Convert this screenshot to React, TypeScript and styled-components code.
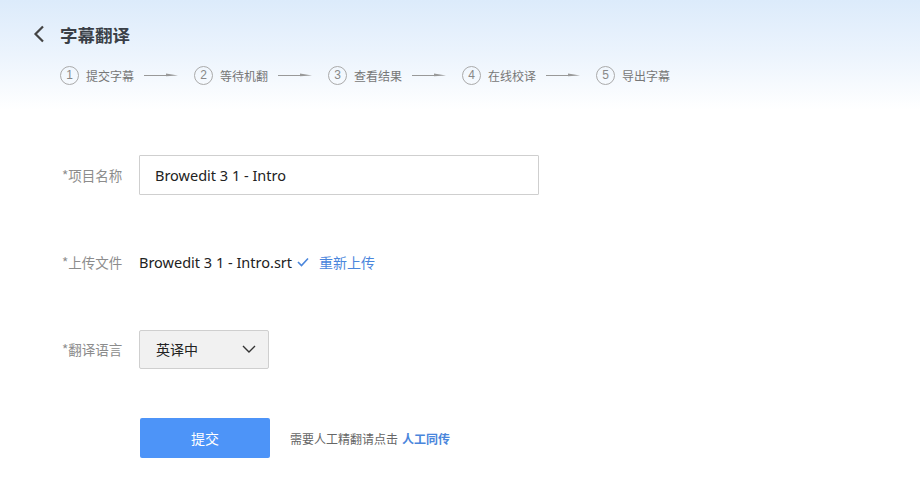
import React from 'react';
import styled, { createGlobalStyle } from 'styled-components';

const GlobalStyle = createGlobalStyle`
  html, body {
    margin: 0;
    padding: 0;
    background: #ffffff;
  }
  body {
    font-family: "Noto Sans", "Noto Sans CJK SC", sans-serif;
    color: #333;
  }
`;

const Page = styled.div`
  width: 920px;
  height: 490px;
  overflow: hidden;
  background: #fff;
`;

const Header = styled.header`
  padding: 20px 0 0 30px;
  height: 90px;
  background: linear-gradient(180deg, #dcebfb 0%, #ecf4fd 50%, #ffffff 100%);
`;

const TitleRow = styled.div`
  display: flex;
  align-items: center;
  height: 28px;
  gap: 12px;
`;

const BackButton = styled.button`
  display: flex;
  align-items: center;
  justify-content: center;
  width: 18px;
  height: 24px;
  padding: 0;
  border: none;
  background: none;
  color: #444;
  cursor: pointer;
`;

const Title = styled.h1`
  margin: 0;
  font-size: 17.5px;
  font-weight: 700;
  color: #3a3f47;
  font-family: "Noto Sans CJK SC", sans-serif;
`;

const Steps = styled.ol`
  display: flex;
  align-items: center;
  list-style: none;
  margin: 16px 0 0 30px;
  padding: 0;
  height: 22px;
`;

const Step = styled.li`
  display: flex;
  align-items: center;
`;

const StepNum = styled.span`
  display: flex;
  align-items: center;
  justify-content: center;
  width: 17px;
  height: 17px;
  border: 1px solid #aaa;
  border-radius: 50%;
  font-size: 12px;
  color: #888;
  font-family: "Liberation Sans", sans-serif;
  margin-right: 7px;
`;

const StepLabel = styled.span`
  font-size: 12px;
  color: #777;
  font-family: "Noto Sans CJK SC", sans-serif;
  width: 48px;
  white-space: nowrap;
`;

const Arrow = styled.svg`
  margin: 0 16px 0 10px;
  flex: none;
`;

const Form = styled.form`
  display: flex;
  flex-direction: column;
  padding: 45px 0 0 62px;
  gap: 47px;
`;

const Row = styled.div<{ $shift?: number }>`
  display: flex;
  align-items: center;
  height: 40px;
  margin-top: ${p => p.$shift ?? 0}px;
`;

const Label = styled.label`
  width: 77px;
  flex: none;
  font-size: 13.5px;
  color: #8c8c8c;
  font-family: "Noto Sans CJK SC", sans-serif;
`;

const TextInput = styled.input`
  box-sizing: border-box;
  width: 400px;
  height: 40px;
  border: 1px solid #cfcfcf;
  border-radius: 1px;
  padding: 0 15px;
  font-size: 14.5px;
  color: #222;
  font-family: "Noto Sans", "Noto Sans CJK SC", sans-serif;
  outline: none;
`;

const FileName = styled.span`
  font-size: 14.5px;
  color: #222;
  font-family: "Noto Sans", sans-serif;
`;

const Check = styled.svg`
  margin: 0 10px 0 5px;
`;

const LinkText = styled.a<{ $bold?: boolean }>`
  color: #4a86dc;
  font-size: ${p => (p.$bold ? 12 : 14)}px;
  font-weight: ${p => (p.$bold ? 700 : 400)};
  text-decoration: none;
  font-family: "Noto Sans CJK SC", sans-serif;
  cursor: pointer;
`;

const Select = styled.div`
  box-sizing: border-box;
  width: 130px;
  height: 39px;
  display: flex;
  align-items: center;
  justify-content: space-between;
  padding: 0 12px 0 16px;
  background: #f1f1f1;
  border: 1px solid #cfcfcf;
  border-radius: 2px;
  font-size: 14px;
  color: #222;
  font-family: "Noto Sans CJK SC", sans-serif;
`;

const SubmitButton = styled.button`
  width: 130px;
  height: 40px;
  margin-left: 78px;
  border: none;
  border-radius: 2px;
  background: #4d94f8;
  color: #fff;
  font-size: 14px;
  font-family: "Noto Sans CJK SC", sans-serif;
  cursor: pointer;
`;

const Hint = styled.span`
  margin-left: 20px;
  font-size: 12px;
  color: #666;
  font-family: "Noto Sans CJK SC", sans-serif;
  display: flex;
  gap: 4px;
`;

const steps = ['提交字幕', '等待机翻', '查看结果', '在线校译', '导出字幕'];

const StepArrow = () => (
  <Arrow width="34" height="8" viewBox="0 0 34 8">
    <line x1="0" y1="4.5" x2="26" y2="4.5" stroke="#999" strokeWidth="1" />
    <path d="M22 2.5 L34 4.5 L22 5.2 Z" fill="#999" />
  </Arrow>
);

export default function App() {
  return (
    <Page>
      <GlobalStyle />
      <Header>
        <TitleRow>
          <BackButton aria-label="back">
            <svg width="12" height="18" viewBox="0 0 12 18">
              <path d="M10 1.5 L2.5 9 L10 16.5" fill="none" stroke="#444" strokeWidth="2.2" />
            </svg>
          </BackButton>
          <Title>字幕翻译</Title>
        </TitleRow>
        <Steps>
          {steps.map((s, i) => (
            <React.Fragment key={s}>
              <Step>
                <StepNum>{i + 1}</StepNum>
                <StepLabel>{s}</StepLabel>
              </Step>
              {i < steps.length - 1 && <StepArrow />}
            </React.Fragment>
          ))}
        </Steps>
      </Header>
      <Form onSubmit={e => e.preventDefault()}>
        <Row>
          <Label>*项目名称</Label>
          <TextInput defaultValue="Browedit 3 1 - Intro" />
        </Row>
        <Row>
          <Label>*上传文件</Label>
          <FileName>Browedit 3 1 - Intro.srt</FileName>
          <Check width="12" height="10" viewBox="0 0 12 10">
            <path d="M1 5 L4.5 8.5 L11 1.5" fill="none" stroke="#4a86dc" strokeWidth="1.6" />
          </Check>
          <LinkText>重新上传</LinkText>
        </Row>
        <Row>
          <Label>*翻译语言</Label>
          <Select>
            <span>英译中</span>
            <svg width="14" height="8" viewBox="0 0 14 8">
              <path d="M1 1 L7 7 L13 1" fill="none" stroke="#333" strokeWidth="1.4" />
            </svg>
          </Select>
        </Row>
        <Row $shift={2}>
          <SubmitButton type="submit">提交</SubmitButton>
          <Hint>
            需要人工精翻请点击
            <LinkText $bold>人工同传</LinkText>
          </Hint>
        </Row>
      </Form>
    </Page>
  );
}
